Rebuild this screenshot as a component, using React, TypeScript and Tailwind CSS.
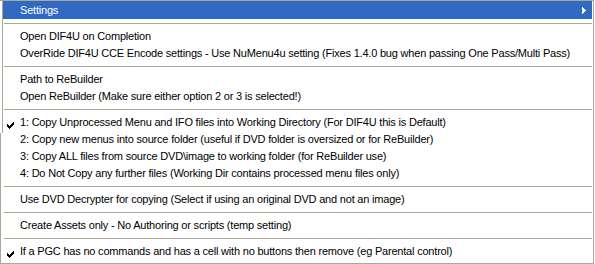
import React from "react";

const LINE = "bg-[#aca899]";

function Check() {
  return (
    <svg width="7" height="7" viewBox="0 0 7 7" shapeRendering="crispEdges" className="absolute left-[4px] top-[8px]">
      <path
        fill="#000"
        d="M0 2h1v3h-1zM1 3h1v3h-1zM2 4h1v3h-1zM3 3h1v3h-1zM4 2h1v3h-1zM5 1h1v3h-1zM6 0h1v3h-1z"
      />
    </svg>
  );
}

function Item({ label, checked }: { label: string; checked?: boolean }) {
  return (
    <div className="relative h-[17px] flex items-center pl-[17px] mr-[1px] text-black whitespace-nowrap">
      {checked && <Check />}
      <span>{label}</span>
    </div>
  );
}

function Sep() {
  return (
    <div className="h-[9px] flex items-center pl-[1px] pr-[1px]">
      <div className={`h-[1px] w-full ${LINE}`} />
    </div>
  );
}

export default function App() {
  return (
    <div
      className="relative w-[595px] h-[264px] bg-white overflow-hidden"
      style={{ fontFamily: "'Liberation Sans', Arial, sans-serif" }}
    >
      <div className="w-[594px] h-[264px] border-t border-r border-b border-[#aca899] pl-[3px] text-[11px] leading-none tracking-[-0.2px]">
        <div className="h-[18px] mr-[1px] bg-[#316ac5] text-white flex items-center pl-[17px]">
          <span>Settings</span>
          <svg width="4" height="7" viewBox="0 0 4 7" shapeRendering="crispEdges" className="ml-auto mr-[6px]">
            <path fill="#fff" d="M0 0h1v7h-1zM1 1h1v5h-1zM2 2h1v3h-1zM3 3h1v1h-1z" />
          </svg>
        </div>
        <Sep />
        <Item label="Open DIF4U on Completion" />
        <Item label="OverRide DIF4U CCE Encode settings - Use NuMenu4u setting (Fixes 1.4.0 bug when passing One Pass/Multi Pass)" />
        <Sep />
        <Item label="Path to ReBuilder" />
        <Item label="Open ReBuilder (Make sure either option 2 or 3 is selected!)" />
        <Sep />
        <Item checked label="1: Copy Unprocessed Menu and IFO files into Working Directory (For DIF4U this is Default)" />
        <Item label="2: Copy new menus into source folder (useful if DVD folder is oversized or for ReBuilder)" />
        <Item label="3: Copy ALL files from source DVD\image to working folder (for ReBuilder use)" />
        <Item label="4: Do Not Copy any further files (Working Dir contains processed menu files only)" />
        <Sep />
        <Item label="Use DVD Decrypter for copying (Select if using an original DVD and not an image)" />
        <Sep />
        <Item label="Create Assets only - No Authoring or scripts (temp setting)" />
        <Sep />
        <Item checked label="If a PGC has no commands and has a cell with no buttons then remove (eg Parental control)" />
      </div>
      <div className={`absolute left-[2px] top-0 w-[1px] h-[133px] ${LINE}`} />
      <div className={`absolute left-0 top-[133px] w-[1px] h-[131px] ${LINE}`} />
    </div>
  );
}
